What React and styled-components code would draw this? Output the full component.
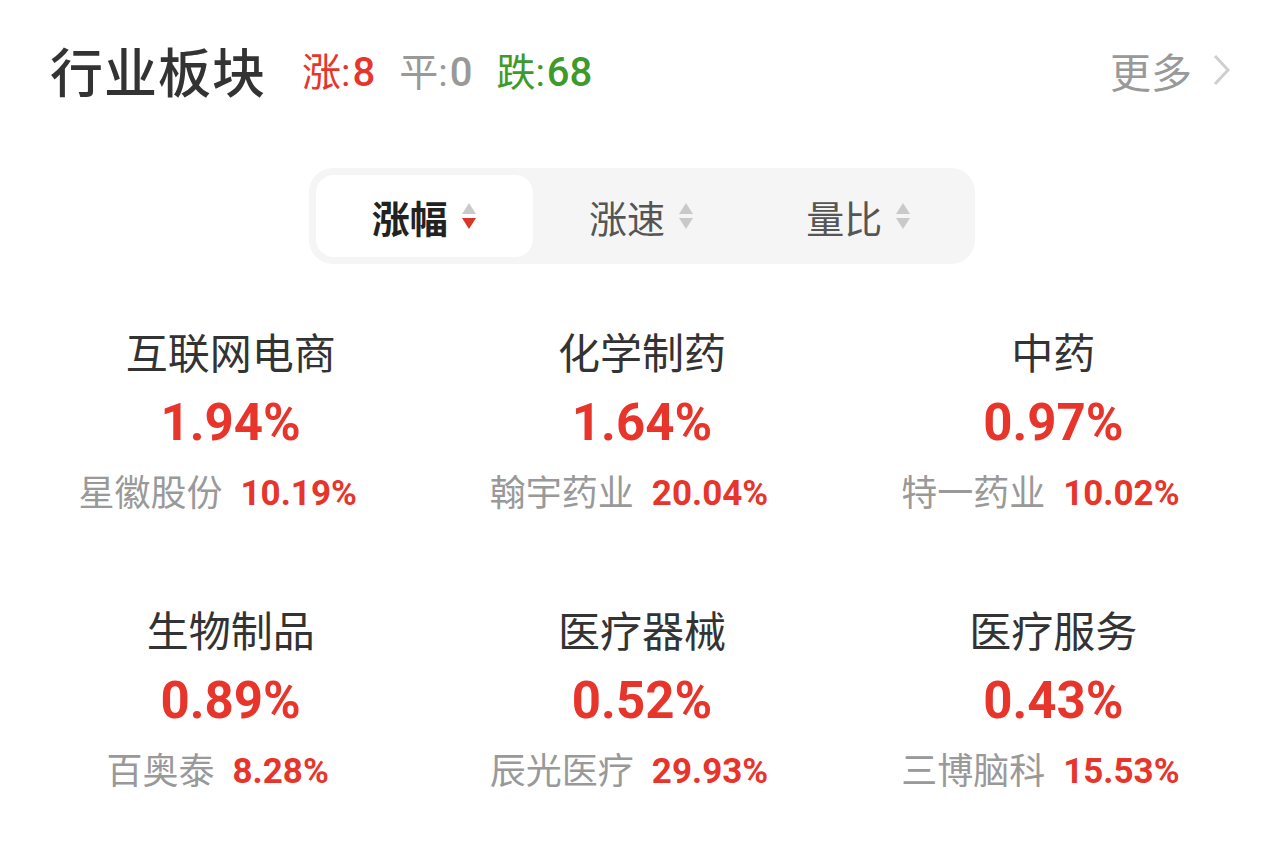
import React, { useState } from "react"
import styled, { createGlobalStyle } from "styled-components"

const GlobalStyle = createGlobalStyle`
  body {
    margin: 0;
    background: #fff;
    font-family: Roboto, "Noto Sans CJK SC", sans-serif;
  }
`

const RED = "#e8352b"
const GREEN = "#3d9a2b"

const Card = styled.div`
  width: 1284px;
  height: 849px;
  background: #fff;
  box-sizing: border-box;
  padding: 0 25px;
`

const Header = styled.div`
  height: 140px;
  display: flex;
  align-items: center;
  padding: 0 27px 0 25px;
`

const Title = styled.h1`
  margin: 0;
  font-size: 53px;
  font-weight: 500;
  color: #333;
  letter-spacing: 1px;
`

const Stats = styled.div`
  display: flex;
  gap: 24px;
  margin-left: 36px;
  margin-top: -2px;
`

const Stat = styled.span`
  font-size: 39px;
  color: ${p => p.color};
  & b {
    font-weight: 500;
    font-size: 40px;
    margin-left: 2px;
  }
`

const More = styled.a`
  margin-left: auto;
  display: flex;
  align-items: center;
  gap: 20px;
  font-size: 41px;
  color: #999;
  text-decoration: none;
  cursor: pointer;
`

const Chevron = () => (
  <svg width="20" height="34" viewBox="0 0 20 34">
    <path d="M3 3 L16 17 L3 31" fill="none" stroke="#cfcfcf" strokeWidth="3" />
  </svg>
)

const TabBar = styled.div`
  width: 652px;
  margin: 28px auto 0;
  padding: 7px;
  background: #f5f5f5;
  border-radius: 24px;
  display: grid;
  grid-template-columns: repeat(3, 1fr);
`

const Tab = styled.div`
  height: 82px;
  border-radius: 18px;
  background: ${p => (p.$active ? "#fff" : "transparent")};
  display: flex;
  align-items: center;
  justify-content: center;
  gap: 12px;
  font-size: 38px;
  font-weight: ${p => (p.$active ? 700 : 400)};
  color: ${p => (p.$active ? "#222" : "#555")};
  cursor: pointer;
`

const SortIcon = ({ active }) => (
  <svg width="18" height="32" viewBox="0 0 18 32">
    <path d="M9 3 L16 14 L2 14 Z" fill="#c9c9c9" />
    <path d="M2 18 L16 18 L9 29 Z" fill={active ? "#d9362b" : "#c9c9c9"} />
  </svg>
)

const Grid = styled.div`
  margin-top: 66px;
  display: grid;
  grid-template-columns: repeat(3, 1fr);
  row-gap: 92px;
`

const Item = styled.div`
  display: flex;
  flex-direction: column;
  align-items: center;
`

const Name = styled.div`
  font-size: 42px;
  line-height: 50px;
  color: #333;
`

const Pct = styled.div`
  margin-top: 13px;
  font-size: 51px;
  line-height: 60px;
  font-weight: 700;
  color: ${RED};
`

const Sub = styled.div`
  margin-top: 19px;
  display: flex;
  align-items: center;
  gap: 18px;
  padding-right: 26px;
  line-height: 44px;
`

const Stock = styled.span`
  font-size: 36px;
  color: #999;
`

const StockPct = styled.span`
  font-size: 35px;
  font-weight: 700;
  color: ${RED};
`

const tabs = ["涨幅", "涨速", "量比"]

const sectors = [
  { name: "互联网电商", pct: "1.94%", stock: "星徽股份", stockPct: "10.19%" },
  { name: "化学制药", pct: "1.64%", stock: "翰宇药业", stockPct: "20.04%" },
  { name: "中药", pct: "0.97%", stock: "特一药业", stockPct: "10.02%" },
  { name: "生物制品", pct: "0.89%", stock: "百奥泰", stockPct: "8.28%" },
  { name: "医疗器械", pct: "0.52%", stock: "辰光医疗", stockPct: "29.93%" },
  { name: "医疗服务", pct: "0.43%", stock: "三博脑科", stockPct: "15.53%" },
]

export default function App() {
  const [active, setActive] = useState(0)

  return (
    <>
      <GlobalStyle />
      <Card>
        <Header>
          <Title>行业板块</Title>
          <Stats>
            <Stat color={RED}>涨:<b>8</b></Stat>
            <Stat color="#999">平:<b>0</b></Stat>
            <Stat color={GREEN}>跌:<b>68</b></Stat>
          </Stats>
          <More>
            更多
            <Chevron />
          </More>
        </Header>

        <TabBar>
          {tabs.map((t, i) => (
            <Tab key={t} $active={i === active} onClick={() => setActive(i)}>
              {t}
              <SortIcon active={i === active} />
            </Tab>
          ))}
        </TabBar>

        <Grid>
          {sectors.map(s => (
            <Item key={s.name}>
              <Name>{s.name}</Name>
              <Pct>{s.pct}</Pct>
              <Sub>
                <Stock>{s.stock}</Stock>
                <StockPct>{s.stockPct}</StockPct>
              </Sub>
            </Item>
          ))}
        </Grid>
      </Card>
    </>
  )
}
